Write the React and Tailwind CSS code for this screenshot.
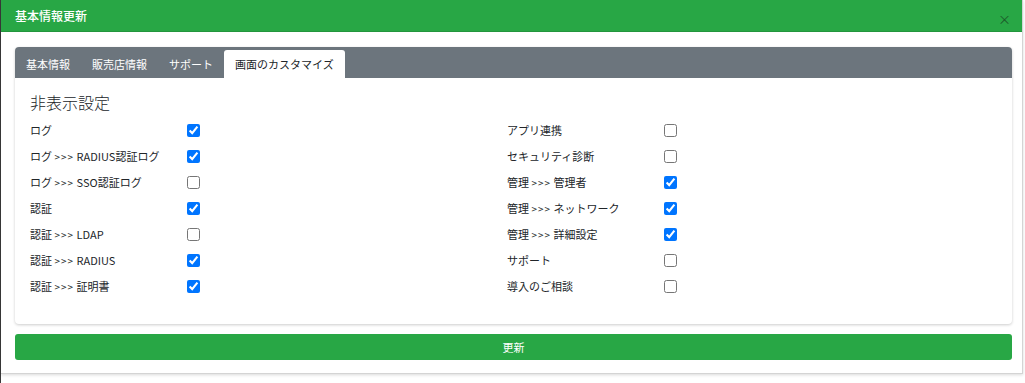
import React from "react";

const left = [
  ["ログ", true],
  ["ログ >>> RADIUS認証ログ", true],
  ["ログ >>> SSO認証ログ", false],
  ["認証", true],
  ["認証 >>> LDAP", false],
  ["認証 >>> RADIUS", true],
  ["認証 >>> 証明書", true],
];
const right = [
  ["アプリ連携", false],
  ["セキュリティ診断", false],
  ["管理 >>> 管理者", true],
  ["管理 >>> ネットワーク", true],
  ["管理 >>> 詳細設定", true],
  ["サポート", false],
  ["導入のご相談", false],
];

function Label({ text }) {
  const parts = text.split(" >>> ");
  if (parts.length === 1) return <>{text}</>;
  return (
    <>
      {parts[0]} <span className="tracking-[1px] text-[10px]">&gt;&gt;&gt;</span> {parts[1]}
    </>
  );
}

function Row({ label, checked }) {
  return (
    <div className="flex items-center h-[26px]">
      <span className="w-[158px] text-[11px] text-[#212529]">
        <Label text={label} />
      </span>
      <input
        type="checkbox"
        defaultChecked={checked}
        className="w-[13px] h-[13px] m-0 -ml-px"
      />
    </div>
  );
}

export default function App() {
  const font = { fontFamily: '"Noto Sans CJK JP", "Noto Sans", sans-serif' };
  return (
    <div className="w-[1025px] h-[383px] bg-white flex" style={font}>
      <div className="w-px h-full bg-[#3a3a3a]" />
      <div className="w-[1022px] h-[374px] bg-white border-r border-b border-[#d4d4d4] shadow-[0_1px_3px_rgba(0,0,0,0.15)] flex flex-col">
        <div className="h-8 bg-[#28a745] border-b border-[#23963d] flex items-center justify-between pl-[14px] pr-[14px]">
          <span className="text-white text-[12px] font-medium">基本情報更新</span>
          <span className="text-[#1c5a2a] text-[13px] leading-none mt-[6px] -mr-[3px]">×</span>
        </div>
        <div className="pl-[14px] pt-[15px] flex flex-col">
          <div className="w-[997px] h-[277px] rounded-[4px] bg-white shadow-[0_1px_3px_rgba(0,0,0,0.2)] flex flex-col overflow-hidden">
            <div className="h-[31px] bg-[#6c757d] flex items-end">
              <div className="h-[28px] px-[11px] flex items-center text-[11px] text-white">基本情報</div>
              <div className="h-[28px] px-[11px] flex items-center text-[11px] text-white">販売店情報</div>
              <div className="h-[28px] px-[11px] flex items-center text-[11px] text-white">サポート</div>
              <div className="h-[28px] px-[11px] flex items-center text-[11px] text-[#212529] bg-white rounded-t-[3px]">画面のカスタマイズ</div>
            </div>
            <div className="pt-[12px] pl-[15px]">
              <div className="text-[16px] leading-[24px] text-[#212529] font-light">非表示設定</div>
              <div className="flex mt-[3px]">
                <div className="w-[477px] flex flex-col">
                  {left.map(([l, c]) => (
                    <Row key={l} label={l} checked={c} />
                  ))}
                </div>
                <div className="flex flex-col">
                  {right.map(([l, c]) => (
                    <Row key={l} label={l} checked={c} />
                  ))}
                </div>
              </div>
            </div>
          </div>
          <button className="mt-[10px] w-[997px] h-[26px] rounded-[3px] bg-[#28a745] text-white text-[11px] flex items-center justify-center">
            更新
          </button>
        </div>
      </div>
    </div>
  );
}
